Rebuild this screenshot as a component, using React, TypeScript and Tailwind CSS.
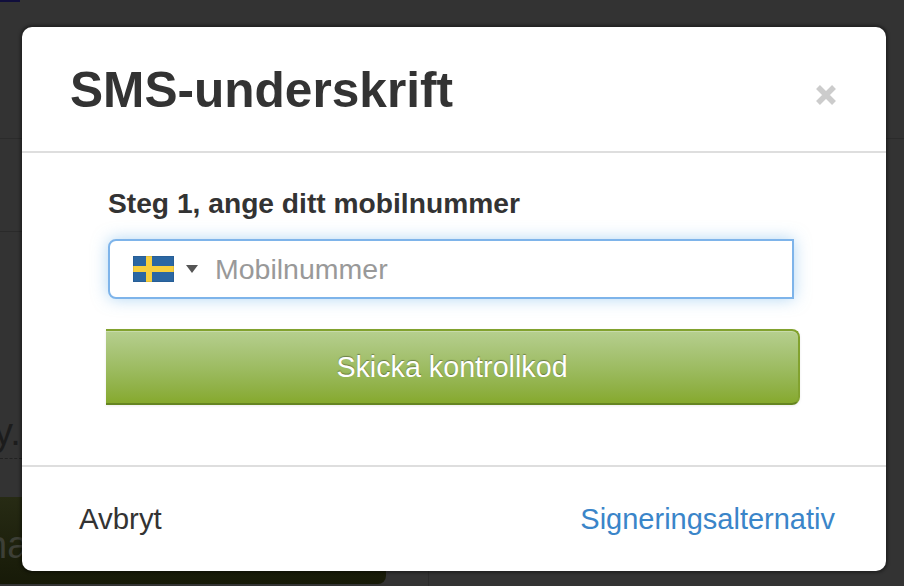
import React from "react";

export default function App() {
  return (
    <div className="relative w-[904px] h-[586px] overflow-hidden bg-[#333333] font-['Liberation_Sans',Arial,sans-serif]">
      {/* dimmed page behind the modal */}
      <div aria-hidden className="absolute inset-0">
        <div className="absolute left-0 top-0 w-[20px] h-[2px] bg-[#100e3c]" />
        <div className="absolute left-0 right-0 top-[138px] h-px bg-[#2b2b2b]" />
        <div className="absolute left-0 top-[231px] w-[22px] h-px bg-[#2a2a2a]" />
        <div className="absolute left-[-6px] top-[410px] text-[38px] leading-[44px] text-[#1c1c1c]">y.c</div>
        <div className="absolute left-0 top-[458px] w-[22px] border-t border-dashed border-[#222222]" />
        <div className="absolute left-0 top-[497px] w-[386px] h-[87px] rounded-br-lg bg-gradient-to-b from-[#272b14] to-[#171a08] overflow-hidden">
          <div className="absolute left-[-14px] top-[26px] text-[38px] leading-[44px] text-[#3d3f36]">ha</div>
        </div>
        <div className="absolute left-[428px] top-[560px] bottom-0 w-px bg-[#2b2b2b]" />
      </div>

      {/* modal */}
      <div className="absolute left-[22px] top-[27px] w-[864px] h-[544px] flex flex-col bg-white rounded-[10px] shadow-[0_0_3px_2px_rgba(0,0,0,0.35)]">
        <div className="h-[126px] shrink-0 flex items-center justify-between pl-[48px] pr-[49px] border-b-2 border-[#dedede]">
          <h1 className="mt-[4px] text-[49.6px] leading-none font-bold text-[#333333]">SMS-underskrift</h1>
          <svg width="22" height="22" viewBox="0 0 22 22" className="mt-[12px]">
            <path d="M3 3 L19 19 M19 3 L3 19" stroke="#cccccc" strokeWidth="5.5" />
          </svg>
        </div>

        <div className="h-[314px] shrink-0 flex flex-col pl-[84px] pr-[86px] border-b-2 border-[#dedede]">
          <label className="mt-[34px] pl-[2px] text-[28.2px] leading-[32px] font-bold text-[#333333]">Steg 1, ange ditt mobilnummer</label>
          <div className="mt-[20px] ml-[2px] mr-[6px] h-[60px] flex items-center rounded-l-[8px] border-2 border-[#7eb4ea] bg-white shadow-[0_0_16px_rgba(102,175,233,0.5)]">
            <svg width="41" height="26" viewBox="0 0 41 26" className="ml-[23px] shrink-0">
              <rect width="41" height="26" fill="#2b67a3" />
              <rect x="13" width="6" height="26" fill="#f7cf3d" />
              <rect y="10" width="41" height="6" fill="#f7cf3d" />
              <rect x="0.5" y="0.5" width="40" height="25" fill="none" stroke="#000000" strokeOpacity="0.08" />
            </svg>
            <svg width="12" height="8" viewBox="0 0 12 8" className="ml-[12px] shrink-0">
              <path d="M0 0 H12 L6 8 Z" fill="#555555" />
            </svg>
            <span className="ml-[17px] text-[28.5px] text-[#999999]">Mobilnummer</span>
          </div>
          <button className="mt-[30px] h-[76px] w-[694px] flex items-center justify-center rounded-r-[8px] border-y-2 border-r-2 border-t-[#82a22f] border-b-[#658521] border-r-[#82a22f] bg-gradient-to-b from-[#b6cf8f] to-[#86a92c] text-[28.7px] text-white shadow-[inset_0_1px_0_rgba(255,255,255,0.25),0_1px_3px_rgba(0,0,0,0.08)] [text-shadow:0_-1px_1px_rgba(0,0,0,0.35)]">
            <span className="mt-[1px]">Skicka kontrollkod</span>
          </button>
        </div>

        <div className="flex-1 flex items-center justify-between pl-[57px] pr-[51px]">
          <a className="mt-[1px] text-[29.4px] text-[#333333]">Avbryt</a>
          <a className="mt-[1px] text-[29px] text-[#3a85c9]">Signeringsalternativ</a>
        </div>
      </div>
    </div>
  );
}
